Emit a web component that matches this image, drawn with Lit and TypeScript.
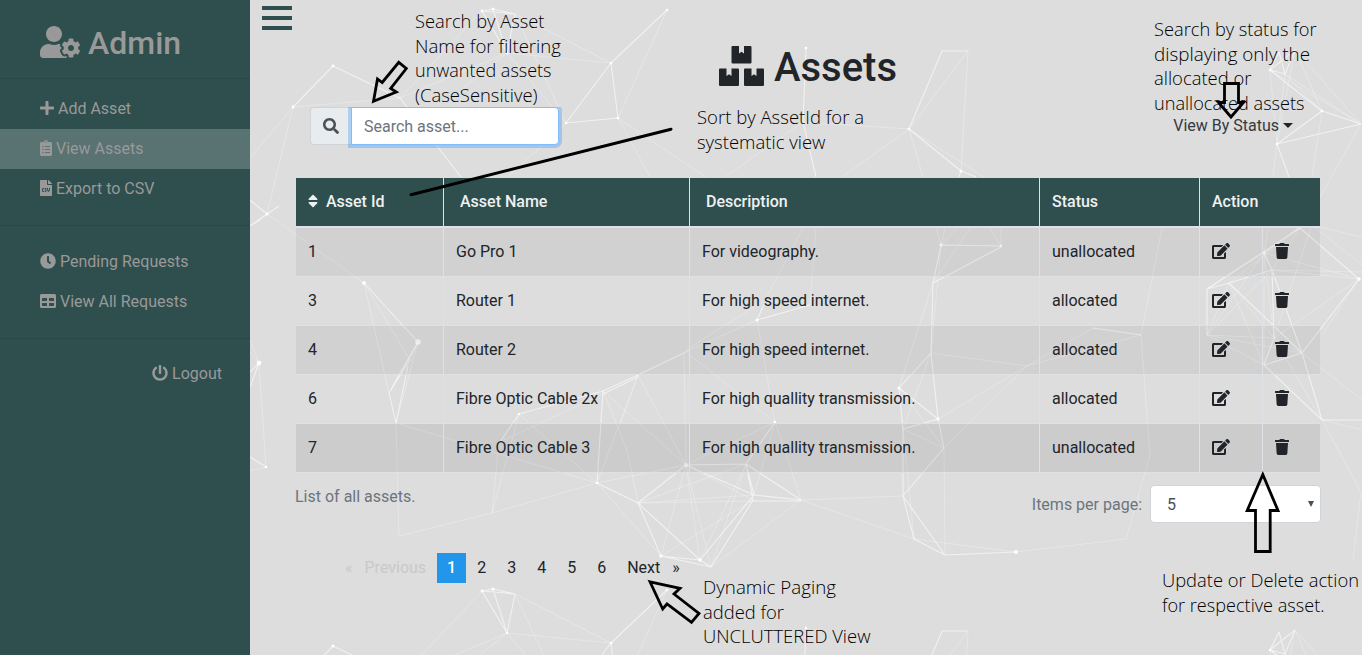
import { LitElement, html, svg, css } from 'lit';
import { customElement } from 'lit/decorators.js';
import { classMap } from 'lit/directives/class-map.js';

const ICONS: Record<string, [number, string]> = {
  plus: [448, 'M416 208H272V64c0-17.67-14.33-32-32-32h-32c-17.67 0-32 14.33-32 32v144H32c-17.67 0-32 14.33-32 32v32c0 17.67 14.33 32 32 32h144v144c0 17.67 14.33 32 32 32h32c17.67 0 32-14.33 32-32V304h144c17.67 0 32-14.33 32-32v-32c0-17.67-14.33-32-32-32z'],
  clipboard: [384, 'M336 64h-80c0-35.3-28.7-64-64-64s-64 28.7-64 64H48C21.5 64 0 85.5 0 112v352c0 26.5 21.5 48 48 48h288c26.5 0 48-21.5 48-48V112c0-26.5-21.5-48-48-48zM96 424c-13.3 0-24-10.7-24-24s10.7-24 24-24 24 10.7 24 24-10.7 24-24 24zm0-96c-13.3 0-24-10.7-24-24s10.7-24 24-24 24 10.7 24 24-10.7 24-24 24zm0-96c-13.3 0-24-10.7-24-24s10.7-24 24-24 24 10.7 24 24-10.7 24-24 24zm96-192c13.3 0 24 10.7 24 24s-10.7 24-24 24-24-10.7-24-24 10.7-24 24-24zm128 368c0 4.4-3.6 8-8 8H168c-4.4 0-8-3.6-8-8v-16c0-4.4 3.6-8 8-8h144c4.4 0 8 3.6 8 8v16zm0-96c0 4.4-3.6 8-8 8H168c-4.4 0-8-3.6-8-8v-16c0-4.4 3.6-8 8-8h144c4.4 0 8 3.6 8 8v16zm0-96c0 4.4-3.6 8-8 8H168c-4.4 0-8-3.6-8-8v-16c0-4.4 3.6-8 8-8h144c4.4 0 8 3.6 8 8v16z'],
  csv: [384, 'M224 136V0H24C10.7 0 0 10.7 0 24v464c0 13.3 10.7 24 24 24h336c13.3 0 24-10.7 24-24V160H248c-13.2 0-24-10.8-24-24zm-96 144c0 4.42-3.58 8-8 8h-8c-8.84 0-16 7.16-16 16v32c0 8.84 7.16 16 16 16h8c4.42 0 8 3.58 8 8v16c0 4.42-3.58 8-8 8h-8c-26.51 0-48-21.49-48-48v-32c0-26.51 21.49-48 48-48h8c4.42 0 8 3.58 8 8v16zm44.27 104H160c-4.42 0-8-3.58-8-8v-16c0-4.42 3.58-8 8-8h12.27c5.95 0 10.41-3.5 10.41-6.62 0-1.3-.75-2.66-2.12-3.84l-21.89-18.77c-8.47-7.22-13.33-17.48-13.33-28.14 0-21.3 19.02-38.62 42.41-38.62H200c4.42 0 8 3.58 8 8v16c0 4.42-3.58 8-8 8h-12.27c-5.95 0-10.41 3.5-10.41 6.62 0 1.3.75 2.66 2.12 3.84l21.89 18.77c8.47 7.22 13.33 17.48 13.33 28.14.01 21.29-19 38.62-42.39 38.62zM256 264v20.8c0 20.27 5.7 40.17 16 56.88 10.3-16.7 16-36.61 16-56.88V264c0-4.42 3.58-8 8-8h16c4.42 0 8 3.58 8 8v20.8c0 35.48-12.88 68.89-36.28 94.09-3.02 3.25-7.27 5.11-11.72 5.11s-8.7-1.86-11.72-5.11c-23.4-25.2-36.28-58.61-36.28-94.09V264c0-4.42 3.58-8 8-8h16c4.42 0 8 3.58 8 8zm121-159L279.1 7c-4.5-4.5-10.6-7-17-7H256v128h128v-6.1c0-6.3-2.5-12.4-7-16.9z'],
  clock: [512, 'M256,8C119,8,8,119,8,256S119,504,256,504,504,393,504,256,393,8,256,8Zm92.49,313h0l-20,25a16,16,0,0,1-22.49,2.5h0l-67-49.72a40,40,0,0,1-15-31.23V112a16,16,0,0,1,16-16h32a16,16,0,0,1,16,16V256l58,42.5A16,16,0,0,1,348.49,321Z'],
  table: [512, 'M464 32H48C21.49 32 0 53.49 0 80v352c0 26.51 21.49 48 48 48h416c26.51 0 48-21.49 48-48V80c0-26.51-21.49-48-48-48zM224 416H64v-96h160v96zm0-160H64v-96h160v96zm224 160H288v-96h160v96zm0-160H288v-96h160v96z'],
  power: [512, 'M400 54.1c63 45 104 118.6 104 201.9 0 136.8-110.8 247.7-247.5 248C120 504.3 8.2 393 8 256.4 7.9 173.1 48.9 99.3 111.8 54.2c11.7-8.3 28-4.8 35 7.7L162.6 90c5.9 10.5 3.1 23.8-6.6 31-41.5 30.8-68 79.6-68 134.9-.1 92.3 74.5 168.1 168 168.1 91.6 0 168.6-74.2 168-169.1-.3-51.8-24.7-101.8-68.1-134-9.7-7.2-12.4-20.5-6.5-30.9l15.8-28.1c7-12.4 23.2-16.1 34.8-7.8zM296 264V24c0-13.3-10.7-24-24-24h-32c-13.3 0-24 10.7-24 24v240c0 13.3 10.7 24 24 24h32c13.3 0 24-10.7 24-24z'],
  usercog: [640, 'M610.5 373.3c2.6-14.1 2.6-28.5 0-42.6l25.8-14.9c3-1.7 4.3-5.2 3.3-8.5-6.7-21.6-18.2-41.2-33.2-57.4-2.3-2.5-6-3.1-9-1.4l-25.8 14.9c-10.9-9.3-23.4-16.5-36.9-21.3v-29.8c0-3.4-2.4-6.4-5.7-7.1-22.3-5-45-4.8-66.2 0-3.3.7-5.7 3.7-5.7 7.1v29.8c-13.5 4.8-26 12-36.9 21.3l-25.8-14.9c-2.9-1.7-6.7-1.1-9 1.4-15 16.2-26.5 35.8-33.2 57.4-1 3.3.4 6.8 3.3 8.5l25.8 14.9c-2.6 14.1-2.6 28.5 0 42.6l-25.8 14.9c-3 1.7-4.3 5.2-3.3 8.5 6.7 21.6 18.2 41.1 33.2 57.4 2.3 2.5 6 3.1 9 1.4l25.8-14.9c10.9 9.3 23.4 16.5 36.9 21.3v29.8c0 3.4 2.4 6.4 5.7 7.1 22.3 5 45 4.8 66.2 0 3.3-.7 5.7-3.7 5.7-7.1v-29.8c13.5-4.8 26-12 36.9-21.3l25.8 14.9c2.9 1.7 6.7 1.1 9-1.4 15-16.2 26.5-35.8 33.2-57.4 1-3.3-.4-6.8-3.3-8.5l-25.8-14.9zM496 400.5c-26.8 0-48.5-21.8-48.5-48.5s21.8-48.5 48.5-48.5 48.5 21.8 48.5 48.5-21.7 48.5-48.5 48.5zM224 256c70.7 0 128-57.3 128-128S294.7 0 224 0 96 57.3 96 128s57.3 128 128 128zm201.2 226.5c-2.3-1.2-4.6-2.6-6.8-3.9l-7.9 4.6c-6 3.4-12.8 5.3-19.6 5.3-10.9 0-21.4-4.6-28.9-12.6-18.3-19.8-32.3-43.9-40.2-69.6-5.5-17.7 1.9-36.4 17.9-45.7l7.9-4.6c-.1-2.6-.1-5.2 0-7.8l-7.9-4.6c-16-9.2-23.4-28-17.9-45.7.9-2.9 2.2-5.8 3.2-8.7-3.8-.3-7.5-1.2-11.4-1.2h-16.7c-22.2 10.2-46.9 16-72.9 16s-50.6-5.8-72.9-16h-16.7C60.2 288 0 348.2 0 422.4V464c0 26.5 21.5 48 48 48h352c10.1 0 19.5-3.2 27.2-8.5-1.2-3.8-2-7.7-2-11.8v-9.2z'],
  boxes: [576, 'M560 288h-80v96l-32-21.3-32 21.3v-96h-80c-8.8 0-16 7.2-16 16v192c0 8.8 7.2 16 16 16h224c8.8 0 16-7.2 16-16V304c0-8.8-7.2-16-16-16zm-384-64h224c8.8 0 16-7.2 16-16V16c0-8.8-7.2-16-16-16h-80v96l-32-21.3L256 96V0h-80c-8.8 0-16 7.2-16 16v192c0 8.8 7.2 16 16 16zm64 64h-80v96l-32-21.3L96 384v-96H16c-8.8 0-16 7.2-16 16v192c0 8.8 7.2 16 16 16h224c8.8 0 16-7.2 16-16V304c0-8.8-7.2-16-16-16z'],
  search: [512, 'M505 442.7L405.3 343c-4.5-4.5-10.6-7-17-7H372c27.6-35.3 44-79.7 44-128C416 93.1 322.9 0 208 0S0 93.1 0 208s93.1 208 208 208c48.3 0 92.7-16.4 128-44v16.3c0 6.4 2.5 12.5 7 17l99.7 99.7c9.4 9.4 24.6 9.4 33.9 0l28.3-28.3c9.4-9.4 9.4-24.6.1-34zM208 336c-70.7 0-128-57.2-128-128 0-70.7 57.2-128 128-128 70.7 0 128 57.2 128 128 0 70.7-57.2 128-128 128z'],
  sort: [320, 'M41 288h238c21.4 0 32.1 25.9 17 41L177 448c-9.4 9.4-24.6 9.4-33.9 0L24 329c-15.1-15.1-4.4-41 17-41zm255-105L177 64c-9.4-9.4-24.6-9.4-33.9 0L24 183c-15.1 15.1-4.4 41 17 41h238c21.4 0 32.1-25.9 17-41z'],
  edit: [576, 'M402.6 83.2l90.2 90.2c3.8 3.8 3.8 10 0 13.8L274.4 405.6l-92.8 10.3c-12.4 1.4-22.9-9.1-21.5-21.5l10.3-92.8L388.8 83.2c3.8-3.8 10-3.8 13.8 0zm162-22.9l-48.8-48.8c-15.2-15.2-39.9-15.2-55.2 0l-35.4 35.4c-3.8 3.8-3.8 10 0 13.8l90.2 90.2c3.8 3.8 10 3.8 13.8 0l35.4-35.4c15.2-15.3 15.2-40 0-55.2zM384 346.2V448H64V128h229.8c3.2 0 6.2-1.3 8.5-3.5l40-40c7.6-7.6 2.2-20.5-8.5-20.5H48C21.5 64 0 85.5 0 112v352c0 26.5 21.5 48 48 48h352c26.5 0 48-21.5 48-48V306.2c0-10.7-12.9-16-20.5-8.5l-40 40c-2.2 2.3-3.5 5.3-3.5 8.5z'],
  trash: [448, 'M432 32H312l-9.4-18.7A24 24 0 0 0 281.1 0H166.8a23.72 23.72 0 0 0-21.4 13.3L136 32H16A16 16 0 0 0 0 48v32a16 16 0 0 0 16 16h416a16 16 0 0 0 16-16V48a16 16 0 0 0-16-16zM53.2 467a48 48 0 0 0 47.9 45h245.8a48 48 0 0 0 47.9-45L416 128H32z'],
};

const icon = (name: string) => {
  const [w, d] = ICONS[name];
  return html`<svg class="icon" viewBox="0 0 ${w} 512" aria-hidden="true"><path d=${d}></path></svg>`;
};

type Seg = [number, number, number, number];

/* Mesh tile: bright and faint edges, then the dots on the vertices. */
const BRIGHT: Seg[] = [
  [482, 11, 493, 9], [493, 9, 515, 14], [482, 11, 515, 14], [482, 11, 507, 53], [493, 9, 507, 53], [515, 14, 507, 53],
  [611, 63, 667, 10], [611, 63, 618, 118], [611, 63, 566, 123], [618, 118, 566, 123], [333, 66, 293, 107], [333, 66, 400, 98],
  [400, 98, 461, 177], [267, 214, 250, 200], [267, 214, 250, 226], [806, 48, 803, 122], [803, 122, 816, 177],
  [942, 51, 968, 51], [909, 129, 942, 51], [909, 129, 961, 171], [961, 171, 976, 177], [961, 171, 959, 177],
  [1270, 70, 1279, 52], [1279, 52, 1285, 74], [1285, 74, 1295, 50], [1270, 70, 1285, 74], [1270, 70, 1295, 50],
  [1270, 70, 1322, 111], [1322, 111, 1361, 124], [1322, 111, 1277, 144], [1277, 144, 1289, 177], [1277, 144, 1361, 124],
  [364, 283, 418, 342], [418, 342, 389, 393], [389, 393, 396, 423], [389, 393, 410, 360], [408, 366, 396, 423],
  [519, 414, 603, 391], [519, 414, 500, 442], [603, 391, 638, 375], [638, 375, 690, 350], [603, 394, 638, 377], [603, 391, 597, 483],
  [757, 320, 765, 302], [757, 320, 810, 305], [941, 245, 933, 283], [941, 245, 1001, 246], [933, 283, 1001, 247],
  [933, 283, 931, 353], [931, 353, 899, 388], [931, 353, 938, 419], [899, 388, 938, 419], [899, 388, 903, 429],
  [903, 429, 938, 419], [938, 419, 944, 448], [903, 429, 903, 496], [775, 422, 746, 464],
  [686, 465, 638, 503], [686, 465, 754, 495], [686, 465, 746, 464], [746, 464, 754, 495], [597, 483, 638, 503],
  [638, 503, 661, 556], [638, 503, 700, 560], [661, 556, 700, 560], [661, 556, 711, 567], [700, 560, 711, 567],
  [700, 560, 754, 495], [711, 567, 753, 500], [746, 464, 753, 500], [754, 495, 801, 500], [753, 501, 801, 501], [746, 464, 801, 500],
  [903, 496, 914, 539], [903, 496, 944, 448], [914, 539, 945, 555], [903, 496, 945, 555], [945, 555, 1016, 552],
  [1207, 289, 1229, 283], [1229, 283, 1272, 270], [1207, 289, 1207, 335], [1264, 253, 1272, 270], [1207, 289, 1300, 228],
  [1272, 270, 1302, 353], [1272, 270, 1274, 338], [1274, 338, 1264, 365], [1264, 365, 1302, 353], [1302, 353, 1322, 420],
  [1264, 365, 1322, 420], [1322, 420, 1362, 420], [1093, 328, 1141, 335], [1300, 228, 1359, 279], [1302, 353, 1359, 279],
  [250, 457, 266, 467], [259, 363, 250, 387], [259, 363, 250, 372], [250, 226, 260, 220], [250, 226, 279, 206],
  [1229, 283, 1302, 353], [1264, 253, 1307, 222],
];
const FAINT: Seg[] = [
  [515, 14, 611, 63], [507, 53, 611, 63], [293, 107, 400, 98], [400, 98, 482, 11], [400, 98, 507, 53], [293, 107, 250, 158],
  [293, 107, 267, 214], [515, 14, 566, 123], [507, 53, 566, 123], [507, 53, 461, 90], [566, 123, 508, 177], [618, 118, 650, 177], [618, 118, 706, 177],
  [667, 10, 618, 118], [803, 122, 725, 177], [803, 122, 909, 129], [909, 129, 968, 51], [968, 51, 961, 171],
  [909, 129, 984, 177], [909, 129, 842, 177], [909, 129, 923, 177], [1285, 74, 1322, 111], [1295, 50, 1322, 111],
  [1295, 50, 1361, 124], [1270, 70, 1361, 124], [1285, 74, 1361, 124], [1277, 144, 1270, 70], [1277, 144, 1285, 74],
  [1277, 144, 1295, 50], [1277, 144, 1273, 177], [1322, 111, 1312, 177], [1361, 124, 1310, 215],
  [267, 214, 364, 283], [364, 283, 389, 393], [364, 283, 410, 360], [418, 342, 396, 423], [418, 342, 410, 360], [418, 342, 392, 386],
  [259, 363, 250, 340], [259, 363, 250, 352], [259, 363, 266, 467], [250, 471, 266, 467],
  [396, 423, 597, 483], [396, 423, 399, 536], [399, 536, 492, 513], [492, 513, 597, 483], [492, 513, 499, 442], [492, 513, 519, 414],
  [519, 414, 597, 483], [500, 442, 603, 394], [603, 391, 627, 450], [603, 391, 686, 465], [638, 375, 620, 425], [638, 375, 686, 465],
  [627, 450, 638, 503], [597, 483, 686, 465], [597, 483, 661, 556], [597, 483, 638, 375], [686, 465, 684, 354], [765, 300, 686, 350],
  [765, 300, 803, 228], [765, 300, 810, 305], [810, 305, 816, 228], [757, 320, 690, 350], [757, 320, 775, 422],
  [775, 422, 688, 354], [775, 422, 686, 465], [775, 422, 754, 495], [775, 422, 801, 500],
  [941, 245, 936, 228], [941, 245, 945, 228], [941, 245, 957, 228], [933, 283, 970, 228], [941, 245, 931, 353],
  [933, 283, 899, 388], [931, 353, 903, 429], [931, 353, 1027, 366], [938, 419, 1027, 366], [903, 429, 944, 448], [899, 388, 944, 448],
  [944, 448, 1027, 366], [944, 448, 945, 555], [1027, 366, 1093, 328], [1001, 246, 1001, 228], [1001, 246, 990, 228],
  [686, 465, 661, 556], [686, 465, 700, 560], [686, 465, 711, 567], [686, 465, 753, 500], [638, 503, 754, 495],
  [638, 503, 753, 501], [638, 503, 746, 464], [661, 556, 753, 500], [700, 560, 746, 464], [711, 567, 746, 464],
  [711, 567, 801, 500], [801, 500, 903, 496], [801, 500, 914, 539], [903, 429, 914, 539], [914, 539, 1016, 552],
  [1016, 552, 1126, 539], [1126, 539, 1150, 455], [1150, 455, 1141, 335], [1141, 335, 1162, 228], [1141, 335, 1027, 366],
  [1264, 253, 1207, 289], [1229, 283, 1300, 228], [1229, 283, 1207, 335], [1229, 283, 1264, 365], [1229, 283, 1274, 338],
  [1264, 253, 1274, 338], [1264, 253, 1264, 365], [1207, 335, 1274, 338], [1207, 335, 1302, 353], [1207, 335, 1272, 270],
  [1207, 335, 1264, 253], [1207, 335, 1264, 365], [1274, 338, 1302, 353], [1264, 253, 1359, 279], [1272, 270, 1359, 279],
  [1272, 270, 1362, 272], [1312, 225, 1362, 237], [1312, 225, 1362, 265], [1359, 279, 1274, 338], [1359, 279, 1322, 335],
  [1302, 353, 1362, 400], [1322, 420, 1362, 430], [1322, 420, 1361, 492], [1361, 492, 1353, 560], [1274, 338, 1322, 420],
  [1272, 270, 1300, 228], [1312, 225, 1274, 338], [1264, 253, 1268, 228],
];
const DOTS: Seg[] = [
  [482, 11, 1.4, 1], [493, 9, 1.5, 1], [507, 53, 1.2, 1], [611, 63, 1.3, 1], [618, 118, 1.3, 1], [566, 123, 1.2, 1],
  [333, 66, 1.4, 1], [293, 107, 1.4, 1], [267, 214, 1.4, 1], [667, 10, 1.3, 1], [806, 48, 1.3, 1], [909, 129, 1.3, 1],
  [961, 171, 1.5, 1], [1322, 111, 1.3, 1], [1270, 70, 1.3, 1], [1277, 144, 1.3, 1], [364, 283, 2, 1], [418, 342, 2.8, .8],
  [259, 363, 2.3, 1], [266, 467, 1.2, 1], [519, 414, 1.2, 1], [757, 320, 1.6, 1], [941, 245, 1.7, .8], [899, 388, 1.6, 1],
  [938, 419, 1.5, 1], [686, 465, 2, .8], [661, 556, 1.6, 1], [700, 560, 1.7, 1], [1016, 552, 1.9, 1], [1001, 246, 1.2, 1],
  [775, 422, 1.3, 1], [1264, 253, 1.5, 1], [1359, 279, 1.7, 1], [597, 483, 1.3, 1],
];

const toPath = (segs: Seg[]) => segs.map(([a, b, c, d]) => `M${a} ${b}L${c} ${d}`).join('');

@customElement('mesh-backdrop')
class MeshBackdrop extends LitElement {
  static styles = css`
    :host { display: block; }
    svg { display: block; width: 100%; height: 100%; }
    .bright { stroke: #fff; stroke-width: 1.1; stroke-opacity: .6; fill: none; }
    .faint { stroke: #fff; stroke-width: 1; stroke-opacity: .27; fill: none; }
  `;
  tile() {
    return svg`
      <path class="faint" d=${toPath(FAINT)}></path>
      <path class="bright" d=${toPath(BRIGHT)}></path>
      ${DOTS.map(([x, y, r, o]) => svg`<circle cx=${x} cy=${y} r=${r} fill="#fff" fill-opacity=${o}></circle>`)}`;
  }
  render() {
    return html`<svg viewBox="250 0 1112 655">
      ${this.tile()}
      ${svg`<g transform="translate(0 580)">${this.tile()}</g>`}
    </svg>`;
  }
}

/* Each note line: x, baseline, drawn width, text. */
const NOTES: [number, number, number, string][] = [
  [415, 28, 129.5, 'Search by Asset'],
  [415, 53, 146, 'Name for filtering'],
  [415, 77, 136.5, 'unwanted assets'],
  [415, 102, 122.5, '(CaseSensitive)'],
  [697, 124, 167, 'Sort by AssetId for a'],
  [697, 149, 128.5, 'systematic view'],
  [1154, 36, 162.5, 'Search by status for'],
  [1154, 61, 156, 'displaying only the'],
  [1154, 85, 97.5, 'allocated or'],
  [1154, 110, 150.5, 'unallocated assets'],
  [703, 594, 133, 'Dynamic Paging'],
  [703, 618.5, 81, 'added for'],
  [703, 642.5, 167.5, 'UNCLUTTERED View'],
  [1162, 587, 197, 'Update or Delete action'],
  [1162, 611.5, 162.5, 'for respective asset.'],
];
const ARROWS = [
  'M398.8 62.3L406.3 68.5L390.7 88.5L396.3 92L373.5 101.3L377.5 79L382.2 82.5Z',
  'M1224.5 83.5H1238.5V102.5H1243.5L1231 117L1218.5 102.5H1224.5Z',
  'M1262.8 474.5L1278 510.5H1270.2V551.5H1255.5V510.5H1247.2Z',
  'M650 581.8L680 588.3L674 594L699 613.5L691.5 622.3L667 604L662.7 609Z',
];

@customElement('note-layer')
class NoteLayer extends LitElement {
  static styles = css`
    :host { display: block; }
    svg { display: block; width: 100%; height: 100%; }
    text { font: 350 18px "Open Sans", "Noto Sans", sans-serif; fill: #000; }
    .arrow { fill: none; stroke: #000; stroke-width: 2.8; }
    .pointer { fill: none; stroke: #000; stroke-width: 3; stroke-linecap: round; }
  `;
  render() {
    return html`<svg viewBox="0 0 1362 655">
      <path class="pointer" d="M411 194.7L671 129.2"></path>
      ${ARROWS.map((d) => svg`<path class="arrow" d=${d}></path>`)}
      ${NOTES.map(([x, y, w, t]) => svg`<text x=${x} y=${y} textLength=${w} lengthAdjust="spacingAndGlyphs">${t}</text>`)}
    </svg>`;
  }
}

@customElement('app-root')
class AppRoot extends LitElement {
  static styles = css`
    :host { display: block; position: relative; width: 1362px; height: 655px; overflow: hidden; font: 16px/24px Roboto, sans-serif; color: #212529; }
    * { box-sizing: border-box; }
    .icon { display: inline-block; height: 1em; width: auto; fill: currentColor; vertical-align: -.125em; overflow: visible; }
    .layout { display: flex; height: 100%; background: #ddd; }
    .sidebar { width: 250px; flex: none; background: #2f4f4f; color: #999; }
    .brand { height: 79px; padding: 24px 0 0 40px; border-bottom: 1px solid #294747; font-size: 32px; line-height: 38px; font-weight: 500; display: flex; gap: 8px; }
    .brand .icon { margin-top: 2px; }
    .group { padding: 10px 0 16px; border-bottom: 1px solid #294747; }
    .group + .group { padding-top: 16px; }
    .link { height: 40px; padding: 8px 0 0 40px; white-space: pre; }
    .link.active { background: #597272; }
    .logout { padding: 23px 28px 0 0; text-align: right; white-space: pre; }
    .main { position: relative; flex: 1; padding: 6px 42px 0 46px; }
    .backdrop { position: absolute; inset: 0; }
    .content { position: relative; }
    .burger { width: 30px; height: 24px; margin-left: -34px; display: flex; flex-direction: column; justify-content: space-between; }
    .bar { height: 4px; background: #2f4f4f; }
    .title { margin: 14px 0 0; font-size: 40px; line-height: 48px; font-weight: 500; display: flex; justify-content: center; align-items: center; gap: 10px; }
    .title .icon { margin-bottom: 4px; }
    .filters { margin-top: 15px; height: 38px; padding: 0 27px 0 14px; display: flex; justify-content: space-between; }
    .search { display: flex; clip-path: inset(0 -4px -4px 0); }
    .addon { width: 41px; display: grid; place-items: center; background: #e9ecef; border: 1px solid #ced4da; border-right: 0; border-radius: 4px 0 0 4px; color: #495057; }
    .field { width: 208px; padding: 7px 12px 5px; background: #fff; border: 1px solid #80bdff; border-radius: 0 4px 4px 0; color: #6c757d; box-shadow: 0 0 0 3px rgba(0, 123, 255, .25); }
    .status { display: flex; gap: 4px; padding-top: 7px; color: #343a40; }
    .caret { margin-top: 9px; width: 0; height: 0; border: 5px solid transparent; border-top-color: #212529; border-bottom: 0; }
    .grid { margin-top: 33px; width: 1024px; }
    .row { display: grid; grid-template-columns: 148px 246px 350px 160px 63px 57px; height: 49px; border-bottom: 1px solid #dee2e6; }
    .row.odd { background: rgba(0, 0, 0, .05); }
    .row.hover { background: rgba(0, 0, 0, .075); }
    .row.head { height: 50px; grid-template-columns: 148px 246px 350px 160px 120px; background: #2f4f4f; color: #eef1f1; font-weight: 500; border-bottom: 2px solid #e3dfeb; }
    .cell { padding: 12px; border-right: 1px solid #dee2e6; white-space: pre; color: #212529; }
    .head .cell { color: #eef1f1; }
    .cell.wide { padding-left: 16px; }
    .cell:last-child { border-right: 0; }
    .under { margin: 12px -1px 0 -1px; display: flex; justify-content: space-between; color: #6c757d; }
    .pager-size { display: flex; align-items: center; gap: 8px; }
    .pager-size span { padding-top: 1px; }
    .select { width: 171px; height: 38px; padding: 0 6px 0 16px; display: flex; align-items: center; justify-content: space-between; background: #fff; border: 1px solid #ced4da; border-radius: 4px; color: #495057; }
    .select-arrow { width: 6px; height: 6px; border: 3px solid transparent; border-top: 6px solid #495057; border-bottom: 0; }
    .pages { margin-top: 30px; padding-left: 49px; display: flex; gap: 1px; line-height: 30px; color: #212529; }
    .page { height: 30px; padding: 0 10px; }
    .page.on { background: #2196ea; color: #fff; font-weight: 500; }
    .page.off { color: #c9c9c9; }
    .page.prev { padding-left: 11px; }
    .page.mark { padding: 0; }
    .page.next { padding-right: 11px; }
    .notes { position: absolute; inset: 0; pointer-events: none; }
  `;

  private rows = [
    ['1', 'Go Pro 1', 'For videography.', 'unallocated'],
    ['3', 'Router 1', 'For high speed internet.', 'allocated'],
    ['4', 'Router 2', 'For high speed internet.', 'allocated'],
    ['6', 'Fibre Optic Cable 2x', 'For high quallity transmission.', 'allocated'],
    ['7', 'Fibre Optic Cable 3', 'For high quallity transmission.', 'unallocated'],
  ];

  private link(name: string, label: string, active = false) {
    return html`<div class=${classMap({ link: true, active })}>${icon(name)} ${label}</div>`;
  }

  render() {
    return html`
      <div class="layout">
        <nav class="sidebar">
          <div class="brand">${icon('usercog')}<span>Admin</span></div>
          <div class="group">
            ${this.link('plus', 'Add Asset')}${this.link('clipboard', 'View Assets', true)}${this.link('csv', 'Export to CSV')}
          </div>
          <div class="group">${this.link('clock', 'Pending Requests')}${this.link('table', 'View All Requests')}</div>
          <div class="logout">${icon('power')} Logout</div>
        </nav>
        <main class="main">
          <mesh-backdrop class="backdrop"></mesh-backdrop>
          <div class="content">
            <div class="burger"><div class="bar"></div><div class="bar"></div><div class="bar"></div></div>
            <h1 class="title">${icon('boxes')}<span>Assets</span></h1>
            <div class="filters">
              <div class="search"><div class="addon">${icon('search')}</div><div class="field">Search asset...</div></div>
              <div class="status"><span>View By Status</span><i class="caret"></i></div>
            </div>
            <div class="grid">
              <div class="row head">
                <div class="cell">${icon('sort')}  Asset Id</div><div class="cell wide">Asset Name</div><div class="cell wide">Description</div>
                <div class="cell">Status</div><div class="cell">Action</div>
              </div>
              ${this.rows.map((r, i) => html`
                <div class=${classMap({ row: true, odd: i % 2 === 0 && i < 4, hover: i === 4 })}>
                  ${r.map((c) => html`<div class="cell">${c}</div>`)}
                  <div class="cell">${icon('edit')}</div><div class="cell">${icon('trash')}</div>
                </div>`)}
            </div>
            <div class="under">
              <span>List of all assets.</span>
              <div class="pager-size"><span>Items per page:</span><div class="select"><span>5</span><i class="select-arrow"></i></div></div>
            </div>
            <div class="pages">
              <span class="page mark off">«</span><span class="page prev off">Previous</span><span class="page on">1</span>
              ${['2', '3', '4', '5', '6'].map((p) => html`<span class="page">${p}</span>`)}
              <span class="page next">Next</span><span class="page mark">»</span>
            </div>
          </div>
        </main>
      </div>
      <note-layer class="notes"></note-layer>
    `;
  }
}
